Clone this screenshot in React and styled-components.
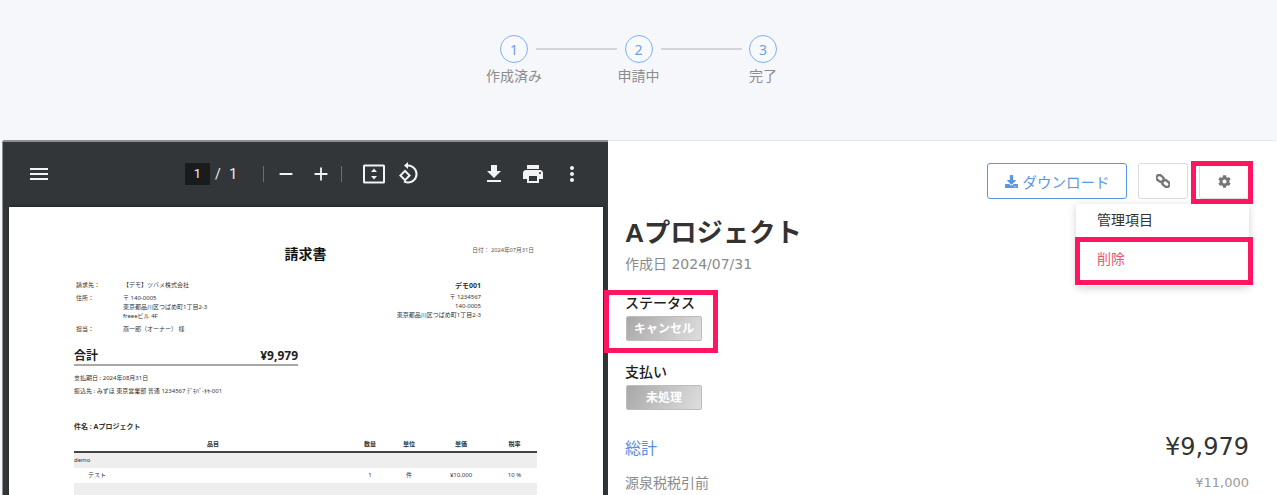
import React from 'react'
import styled, { createGlobalStyle } from 'styled-components'
import { FaDownload, FaCog } from 'react-icons/fa'

const PINK = '#ff1560'
const BLUE = '#5b96e6'
const JP = '"Noto Sans", "Noto Sans CJK JP", sans-serif'
const PANEL = '"DejaVu Sans", "Noto Sans CJK JP", sans-serif'

const Global = createGlobalStyle`
  html, body { margin: 0; padding: 0; background: #f5f7fb; }
  body { font-family: ${JP}; overflow: hidden; }
  #root { height: 495px; overflow: hidden; }
`

const Stepper = styled.div`
  display: flex;
  justify-content: flex-start;
  height: 140px;
  box-sizing: border-box;
  padding: 35px 0 0 500px;
`
const Step = styled.div`
  display: flex;
  flex-direction: column;
  align-items: center;
  width: 28px;
`
const Circle = styled.div`
  width: 28px;
  height: 28px;
  box-sizing: border-box;
  border: 1.5px solid #7fb0ec;
  border-radius: 50%;
  display: flex;
  align-items: center;
  justify-content: center;
  font-size: 14px;
  color: #6f9fe8;
  background: #f7f9fd;
`
const StepLabel = styled.div`
  margin-top: 3px;
  font-size: 14px;
  line-height: 20px;
  color: #8c8c8c;
  white-space: nowrap;
`
const StepLine = styled.div`
  width: 81px;
  height: 2px;
  background: #d4d5d8;
  margin: 13px 7.5px 0 8px;
`

const Card = styled.div`
  display: flex;
  margin-left: 2px;
  height: 355px;
  background: #fff;
  border-radius: 4px 4px 0 0;
  overflow: hidden;
`
const Viewer = styled.div`
  width: 606px;
  flex: none;
  background: #323639;
  border-left: 1px solid #8c8e90;
  border-top: 2px solid #8c8e90;
  box-sizing: border-box;
`
const Toolbar = styled.div`
  display: flex;
  align-items: center;
  height: 65px;
  box-sizing: border-box;
  padding: 0 0 2px 24px;
  color: #f1f3f4;
`
const ToolIcon = styled.svg`
  width: ${p => p.$size || 24}px;
  height: ${p => p.$size || 24}px;
  flex: none;
  margin-left: ${p => p.$ml || 0}px;
  fill: currentColor;
`
const PageBox = styled.div`
  width: 25px;
  height: 22px;
  margin-left: 134px;
  background: #191b1c;
  font-size: 13px;
  line-height: 22px;
  text-align: center;
  font-family: "Roboto", sans-serif;
`
const PageTotal = styled.div`
  margin-left: 5px;
  width: 24px;
  font-size: 14px;
  font-family: "Roboto", sans-serif;
  word-spacing: 5px;
  white-space: nowrap;
`
const ToolSep = styled.div`
  width: 1px;
  height: 16px;
  background: #6b6e70;
  margin-left: ${p => p.$ml}px;
`

const PageArea = styled.div`
  padding: 0 5px 0 6px;
`
const Page = styled.div`
  background: #fff;
  height: 290px;
  box-sizing: border-box;
  padding: 34px 66px 0 65px;
  color: #333;
  font-size: 6px;
  line-height: 9px;
  overflow: hidden;
  box-shadow: 0 -1px 3px rgba(0, 0, 0, .3);
`
const PageHead = styled.div`
  display: grid;
  grid-template-columns: 1fr auto 1fr;
  align-items: start;
`
const PageTitle = styled.div`
  grid-column: 2;
  font-size: 14px;
  line-height: 26px;
  font-weight: 700;
  color: #111;
`
const PageDate = styled.div`
  justify-self: end;
  margin: 5px 3px 0 0;
  font-size: 5.7px;
  color: #555;
`
const Parties = styled.div`
  display: flex;
  justify-content: space-between;
  margin-top: 14px;
  padding: 0 56px 0 2px;
`
const PartyRow = styled.div`
  display: grid;
  grid-template-columns: 47px auto;
  margin-bottom: ${p => p.$mb || 4}px;
`
const Seller = styled.div`
  text-align: right;
`
const SellerName = styled.div`
  font-size: 7px;
  font-weight: 700;
  line-height: 9px;
  margin-bottom: 3px;
`
const TotalRow = styled.div`
  display: flex;
  justify-content: space-between;
  align-items: flex-end;
  width: 224px;
  margin-top: 10px;
  border-bottom: 2px solid #a8a8a8;
  font-size: 12px;
  line-height: 16px;
  font-weight: 700;
  color: #222;
`
const PayLine = styled.div`
  margin-top: ${p => p.$mt}px;
`
const Subject = styled.div`
  margin-top: 26px;
  font-size: 7px;
  line-height: 9px;
  font-weight: 700;
`
const ItemRow = styled.div`
  display: grid;
  grid-template-columns: 278px 36px 42px 62px 45px;
  height: ${p => p.$h || 15}px;
  align-items: center;
  background: ${p => (p.$shade ? '#eeeeee' : '#fff')};
  border-bottom: ${p => (p.$head ? '2px solid #444' : 'none')};
  font-weight: ${p => (p.$head ? 700 : 400)};
  margin-top: ${p => p.$mt || 0}px;
`
const Cell = styled.div`
  text-align: ${p => (p.$left ? 'left' : 'center')};
  padding-left: ${p => p.$pl || 0}px;
`

const Side = styled.div`
  flex: 1;
  position: relative;
  box-sizing: border-box;
  padding: 22px 28px 0 17px;
  border-top: 1px solid #e4e6ea;
  font-family: ${PANEL};
`
const Actions = styled.div`
  display: flex;
  justify-content: flex-end;
  gap: 11px;
`
const ActionButton = styled.button`
  display: flex;
  align-items: center;
  justify-content: center;
  gap: 5px;
  width: ${p => p.$w}px;
  height: 36px;
  padding: 0;
  background: #fff;
  border: 1px solid ${p => (p.$primary ? BLUE : '#dcdcdc')};
  border-radius: 3px;
  color: ${p => (p.$primary ? BLUE : '#777')};
  font-family: ${JP};
  font-size: 14.5px;
`
const LinkGlyph = styled.svg`
  width: 14px;
  height: 14px;
  fill: none;
  stroke: #777;
  stroke-width: 2.4;
`
const Menu = styled.div`
  position: absolute;
  top: 63px;
  right: 28px;
  width: 173px;
  height: 82px;
  background: #fff;
  box-shadow: 0 2px 8px rgba(0, 0, 0, .18);
  font-family: ${JP};
  font-size: 14px;
`
const MenuItem = styled.div`
  height: 39px;
  line-height: 32px;
  padding: 0 0 0 21px;
  color: ${p => (p.$danger ? '#e85a70' : '#333')};
`
const Highlight = styled.div`
  position: absolute;
  box-sizing: border-box;
  border: 5px solid ${PINK};
  left: ${p => p.$x}px;
  top: ${p => p.$y}px;
  width: ${p => p.$w}px;
  height: ${p => p.$h}px;
  z-index: 5;
`
const ProjectTitle = styled.h1`
  margin: 16px 0 0;
  font-family: "Liberation Sans", "Noto Sans CJK JP", sans-serif;
  font-size: 26.3px;
  line-height: 36px;
  font-weight: 700;
  color: #333;
`
const CreatedAt = styled.div`
  margin-top: 3px;
  font-size: 14px;
  line-height: 20px;
  color: #8a8a8a;
`
const FieldLabel = styled.div`
  margin-top: ${p => p.$mt}px;
  font-family: ${JP};
  font-size: 14px;
  line-height: 20px;
  font-weight: 500;
  color: #222;
`
const Badge = styled.div`
  width: 76px;
  height: 25px;
  margin: 3px 0 0 1px;
  box-sizing: border-box;
  border: 1px solid #bdbdbd;
  border-radius: 2px;
  background: linear-gradient(120deg, #a8a8a8, #dedede);
  color: #fff;
  font-family: ${JP};
  font-size: 12px;
  font-weight: 700;
  line-height: 23px;
  text-align: center;
`
const TotalLine = styled.div`
  display: flex;
  justify-content: space-between;
  align-items: center;
  margin-top: 20px;
  height: 34px;
`
const TotalName = styled.div`
  font-family: ${JP};
  font-size: 16px;
  color: #5b8de0;
`
const TotalValue = styled.div`
  font-size: 24px;
  color: #333;
`
const SubLine = styled.div`
  display: flex;
  justify-content: space-between;
  margin-top: 9px;
  font-family: ${JP};
  font-size: 14px;
  line-height: 20px;
  color: #8a8a8a;
`
const SubValue = styled.span`
  font-family: ${PANEL};
  font-size: 13px;
  color: #9a9a9a;
`

const steps = [
  ['1', '作成済み'],
  ['2', '申請中'],
  ['3', '完了'],
]

function Steps() {
  return (
    <Stepper>
      {steps.map(([n, label], i) => (
        <React.Fragment key={n}>
          <Step>
            <Circle>{n}</Circle>
            <StepLabel>{label}</StepLabel>
          </Step>
          {i < 2 && <StepLine />}
        </React.Fragment>
      ))}
    </Stepper>
  )
}

function PdfToolbar() {
  return (
    <Toolbar>
      <ToolIcon viewBox="0 0 24 24"><path d="M3 18h18v-2H3v2zm0-5h18v-2H3v2zm0-7v2h18V6H3z" /></ToolIcon>
      <PageBox>1</PageBox>
      <PageTotal>/ 1</PageTotal>
      <ToolSep $ml={24} />
      <ToolIcon viewBox="0 0 24 24" $ml={11} $size={22}><path d="M5 11h14v2H5z" /></ToolIcon>
      <ToolIcon viewBox="0 0 24 24" $ml={13} $size={22}><path d="M19 13h-6v6h-2v-6H5v-2h6V5h2v6h6v2z" /></ToolIcon>
      <ToolSep $ml={9} />
      <ToolIcon viewBox="0 0 24 24" $ml={20}>
        <path d="M2.500 2.500h19a1.500 1.500 0 0 1 1.500 1.500v16a1.500 1.500 0 0 1-1.500 1.500h-19A1.500 1.500 0 0 1 1 20V4a1.500 1.500 0 0 1 1.500-1.500zM3 4.500v15h18v-15H3z" />
        <path d="M12 6.500l3 3.500H9zM12 17.500L9 14h6z" />
      </ToolIcon>
      <ToolIcon viewBox="0 0 24 24" $ml={10}>
        <path d="M12 2.500V0L8 3.500 12 7V4.500a7.500 7.500 0 0 1 0 15c-1.300 0-2.500-.3-3.500-.9l-1.100 1.700A9.500 9.500 0 1 0 12 2.500z" />
        <path d="M9 7.500L3 13.500l6 6 6-6-6-6zm0 2.800l3.200 3.200L9 16.700l-3.200-3.200L9 10.300z" />
      </ToolIcon>
      <ToolIcon viewBox="0 0 24 24" $ml={62}><path d="M19 9h-4V3H9v6H5l7 7 7-7zM5 18v2h14v-2H5z" /></ToolIcon>
      <ToolIcon viewBox="0 0 24 24" $ml={15}><path d="M19 8H5c-1.660 0-3 1.340-3 3v6h4v4h12v-4h4v-6c0-1.660-1.340-3-3-3zm-3 11H8v-5h8v5zm3-7c-.55 0-1-.45-1-1s.45-1 1-1 1 .45 1 1-.45 1-1 1zm-1-9H6v4h12V3z" /></ToolIcon>
      <ToolIcon viewBox="0 0 24 24" $ml={15}><path d="M12 8c1.100 0 2-.9 2-2s-.9-2-2-2-2 .9-2 2 .9 2 2 2zm0 2c-1.100 0-2 .9-2 2s.9 2 2 2 2-.9 2-2-.9-2-2-2zm0 6c-1.100 0-2 .9-2 2s.9 2 2 2 2-.9 2-2-.9-2-2-2z" /></ToolIcon>
    </Toolbar>
  )
}

function InvoicePage() {
  return (
    <Page>
      <PageHead>
        <PageTitle>請求書</PageTitle>
        <PageDate>日付： 2024年07月31日</PageDate>
      </PageHead>
      <Parties>
        <div>
          <PartyRow><span>請求先：</span><span>【デモ】ツバメ株式会社</span></PartyRow>
          <PartyRow $mb={4}>
            <span>住所：</span>
            <span>〒 140-0005<br />東京都品川区つばめ町1丁目2-3<br />freeeビル 4F</span>
          </PartyRow>
          <PartyRow><span>担当：</span><span>燕一郎（オーナー） 様</span></PartyRow>
        </div>
        <Seller>
          <SellerName>デモ001</SellerName>
          〒 1234567<br />140-0005<br />東京都品川区つばめ町1丁目2-3
        </Seller>
      </Parties>
      <TotalRow><span>合計</span><span>¥9,979</span></TotalRow>
      <PayLine $mt={8}>支払期日 : 2024年08月31日</PayLine>
      <PayLine $mt={4}>振込先 : みずほ 東京営業部 普通 1234567 ﾃﾞﾓﾊﾞ-ｷﾔ-001</PayLine>
      <Subject>件名 : Aプロジェクト</Subject>
      <ItemRow $head $h={13} $mt={7}>
        <Cell>品目</Cell><Cell>数量</Cell><Cell>単位</Cell><Cell>単価</Cell><Cell>税率</Cell>
      </ItemRow>
      <ItemRow $shade><Cell $left>demo</Cell></ItemRow>
      <ItemRow>
        <Cell $left $pl={14}>テスト</Cell><Cell>1</Cell><Cell>件</Cell><Cell>¥10,000</Cell><Cell>10 %</Cell>
      </ItemRow>
      <ItemRow $shade $h={20} />
    </Page>
  )
}

function DetailPanel() {
  return (
    <Side>
      <Actions>
        <ActionButton $primary $w={140}><FaDownload size={13} />ダウンロード</ActionButton>
        <ActionButton $w={50}>
          <LinkGlyph viewBox="0 0 14 14">
            <rect x="0.5" y="1.5" width="7.5" height="5.5" rx="2.7" transform="rotate(40 4 4)" />
            <rect x="6" y="7" width="7.5" height="5.5" rx="2.7" transform="rotate(40 10 10)" />
          </LinkGlyph>
        </ActionButton>
        <ActionButton $w={50}><FaCog size={13} /></ActionButton>
      </Actions>
      <Highlight $x={583} $y={20} $w={62} $h={43} />
      <Menu>
        <MenuItem>管理項目</MenuItem>
        <MenuItem $danger>削除</MenuItem>
      </Menu>
      <Highlight $x={467} $y={96} $w={178} $h={48} />
      <ProjectTitle>Aプロジェクト</ProjectTitle>
      <CreatedAt>作成日 2024/07/31</CreatedAt>
      <Highlight $x={-4} $y={149} $w={114} $h={63} />
      <FieldLabel $mt={19}>ステータス</FieldLabel>
      <Badge>キャンセル</Badge>
      <FieldLabel $mt={21}>支払い</FieldLabel>
      <Badge>未処理</Badge>
      <TotalLine>
        <TotalName>総計</TotalName>
        <TotalValue>¥9,979</TotalValue>
      </TotalLine>
      <SubLine>
        <span>源泉税税引前</span>
        <SubValue>¥11,000</SubValue>
      </SubLine>
    </Side>
  )
}

export default function App() {
  return (
    <>
      <Global />
      <Steps />
      <Card>
        <Viewer>
          <PdfToolbar />
          <PageArea>
            <InvoicePage />
          </PageArea>
        </Viewer>
        <DetailPanel />
      </Card>
    </>
  )
}
